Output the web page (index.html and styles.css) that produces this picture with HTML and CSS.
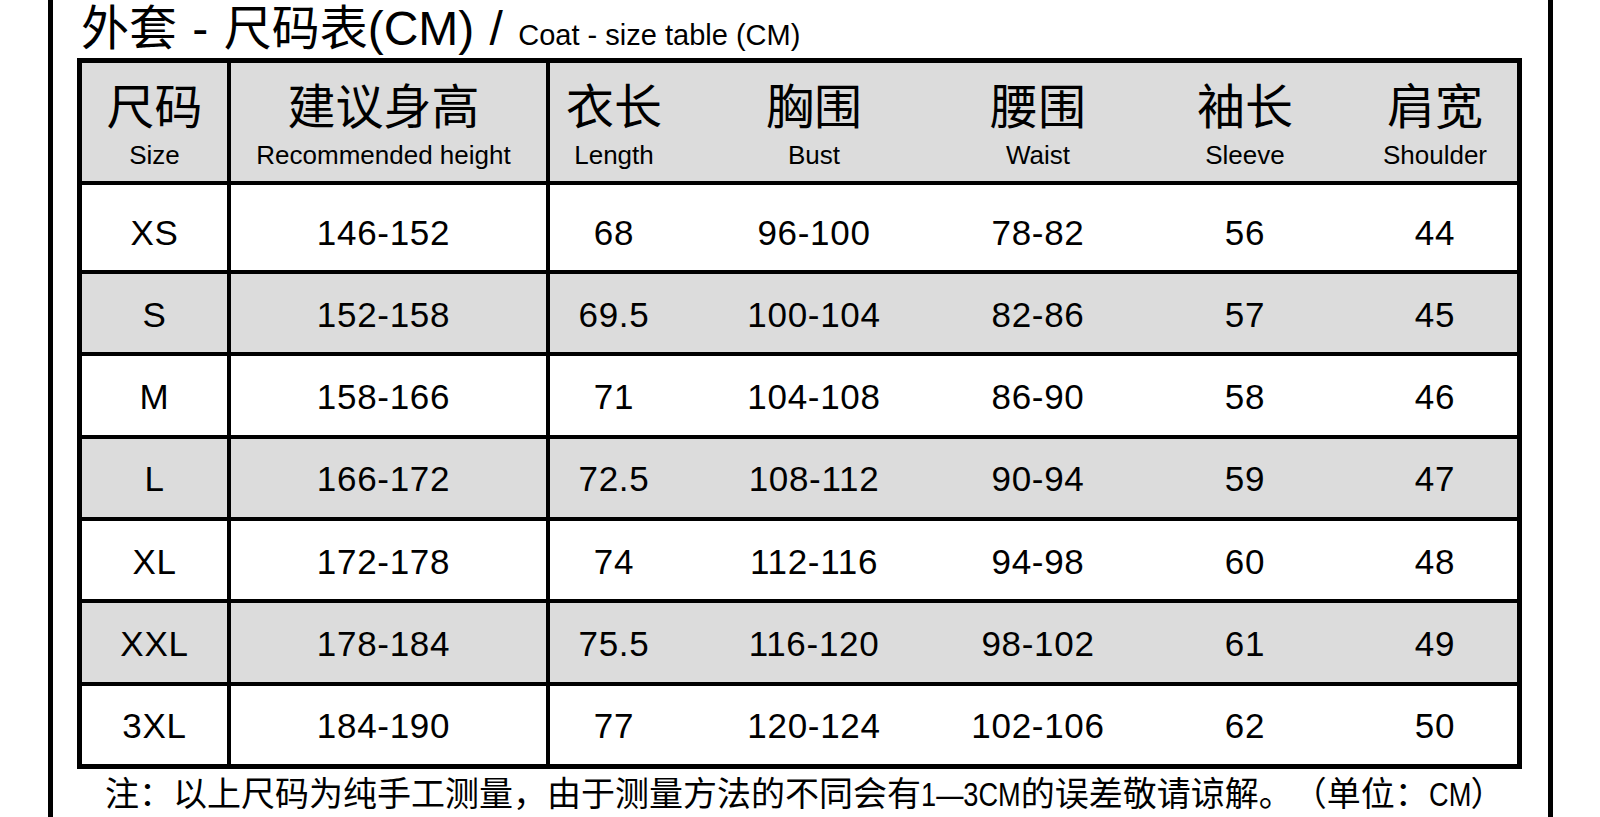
FILE: index.html
```html
<!DOCTYPE html>
<html lang="zh-CN">
<head>
<meta charset="utf-8">
<title>外套 - 尺码表</title>
<link rel="stylesheet" href="styles.css">
</head>
<body>
<div class="frame">
  <h1 class="title"><span class="title-main">外套 - 尺码表(CM) / </span><span class="title-sub">Coat - size table (CM)</span></h1>
  <div class="sheet">
    <div class="row head">
      <div class="cell c1"><span class="zh">尺码</span><span class="en">Size</span></div>
      <div class="cell c2"><span class="zh">建议身高</span><span class="en">Recommended height</span></div>
      <div class="cell"><span class="zh">衣长</span><span class="en">Length</span></div>
      <div class="cell"><span class="zh">胸围</span><span class="en">Bust</span></div>
      <div class="cell"><span class="zh">腰围</span><span class="en">Waist</span></div>
      <div class="cell"><span class="zh">袖长</span><span class="en">Sleeve</span></div>
      <div class="cell c7"><span class="zh">肩宽</span><span class="en">Shoulder</span></div>
    </div>
    <div class="row data first">
      <div class="cell c1">XS</div><div class="cell c2">146-152</div><div class="cell">68</div><div class="cell">96-100</div><div class="cell">78-82</div><div class="cell">56</div><div class="cell c7">44</div>
    </div>
    <div class="row data alt">
      <div class="cell c1">S</div><div class="cell c2">152-158</div><div class="cell">69.5</div><div class="cell">100-104</div><div class="cell">82-86</div><div class="cell">57</div><div class="cell c7">45</div>
    </div>
    <div class="row data">
      <div class="cell c1">M</div><div class="cell c2">158-166</div><div class="cell">71</div><div class="cell">104-108</div><div class="cell">86-90</div><div class="cell">58</div><div class="cell c7">46</div>
    </div>
    <div class="row data alt">
      <div class="cell c1">L</div><div class="cell c2">166-172</div><div class="cell">72.5</div><div class="cell">108-112</div><div class="cell">90-94</div><div class="cell">59</div><div class="cell c7">47</div>
    </div>
    <div class="row data">
      <div class="cell c1">XL</div><div class="cell c2">172-178</div><div class="cell">74</div><div class="cell">112-116</div><div class="cell">94-98</div><div class="cell">60</div><div class="cell c7">48</div>
    </div>
    <div class="row data alt">
      <div class="cell c1">XXL</div><div class="cell c2">178-184</div><div class="cell">75.5</div><div class="cell">116-120</div><div class="cell">98-102</div><div class="cell">61</div><div class="cell c7">49</div>
    </div>
    <div class="row data">
      <div class="cell c1">3XL</div><div class="cell c2">184-190</div><div class="cell">77</div><div class="cell">120-124</div><div class="cell">102-106</div><div class="cell">62</div><div class="cell c7">50</div>
    </div>
  </div>
  <p class="note">注：以上尺码为纯手工测量，由于测量方法的不同会有<span class="narrow range">1—3CM</span>的误差敬请谅解。（单位：<span class="narrow unit">CM</span>）</p>
</div>
</body>
</html>
```

FILE: styles.css
```css
html, body {
  margin: 0;
  padding: 0;
  background: #ffffff;
}

body {
  width: 1600px;
  height: 817px;
  overflow: hidden;
  color: #000;
  font-family: "Liberation Sans", "Noto Sans CJK SC", sans-serif;
  text-spacing-trim: space-all;
}

.frame {
  box-sizing: border-box;
  margin-left: 48px;
  width: 1505px;
  height: 817px;
  border-left: 5px solid #000;
  border-right: 5px solid #000;
  display: flex;
  flex-direction: column;
}

.title {
  margin: 0;
  height: 58px;
  box-sizing: border-box;
  padding: 6px 0 0 28px;
  font-weight: normal;
  font-size: 48px;
  line-height: 46px;
  white-space: nowrap;
}

.title-main {
  word-spacing: 2px;
}

.title-sub {
  font-size: 29px;
}

.sheet {
  box-sizing: border-box;
  margin-left: 24px;
  width: 1445px;
  height: 711px;
  border: 5px solid #000;
  display: flex;
  flex-direction: column;
}

.row {
  display: grid;
  grid-template-columns: 149px 319px 128px 272px 176px 238px 1fr;
  box-sizing: border-box;
}

.row + .row {
  border-top: 4px solid #000;
}

.head {
  height: 118px;
  background: #dcdcdc;
}

.data {
  flex: 1;
  background: #fff;
}

.data.first {
  flex: 0 0 89px;
}

.data.alt {
  background: #dcdcdc;
}

.cell {
  display: flex;
  flex-direction: column;
  align-items: center;
  justify-content: center;
  box-sizing: border-box;
}

.c1, .c2 {
  border-right: 4px solid #000;
}

.c2 {
  padding-right: 10px;
}

.c7 {
  padding-right: 11px;
}

.head .cell {
  justify-content: flex-start;
  padding-top: 16px;
}

.head .zh {
  font-family: "Noto Sans CJK SC", sans-serif;
  font-size: 48px;
  line-height: 48px;
}

.head .en {
  margin-top: 13px;
  font-family: "Liberation Sans", sans-serif;
  font-size: 26px;
  line-height: 30px;
  white-space: nowrap;
}

.data .cell {
  padding-top: 2px;
  font-size: 35px;
  line-height: 35px;
  letter-spacing: 0.7px;
}

.data.first .cell {
  padding-top: 10px;
}

.note {
  margin: 8px 0 0 0;
  padding-left: 52px;
  font-size: 34px;
  line-height: 34px;
  white-space: nowrap;
}

.narrow {
  display: inline-block;
  transform: scaleX(0.8);
  transform-origin: left center;
}

.range {
  margin-right: -25px;
}

.unit {
  margin-right: -11px;
}
```
